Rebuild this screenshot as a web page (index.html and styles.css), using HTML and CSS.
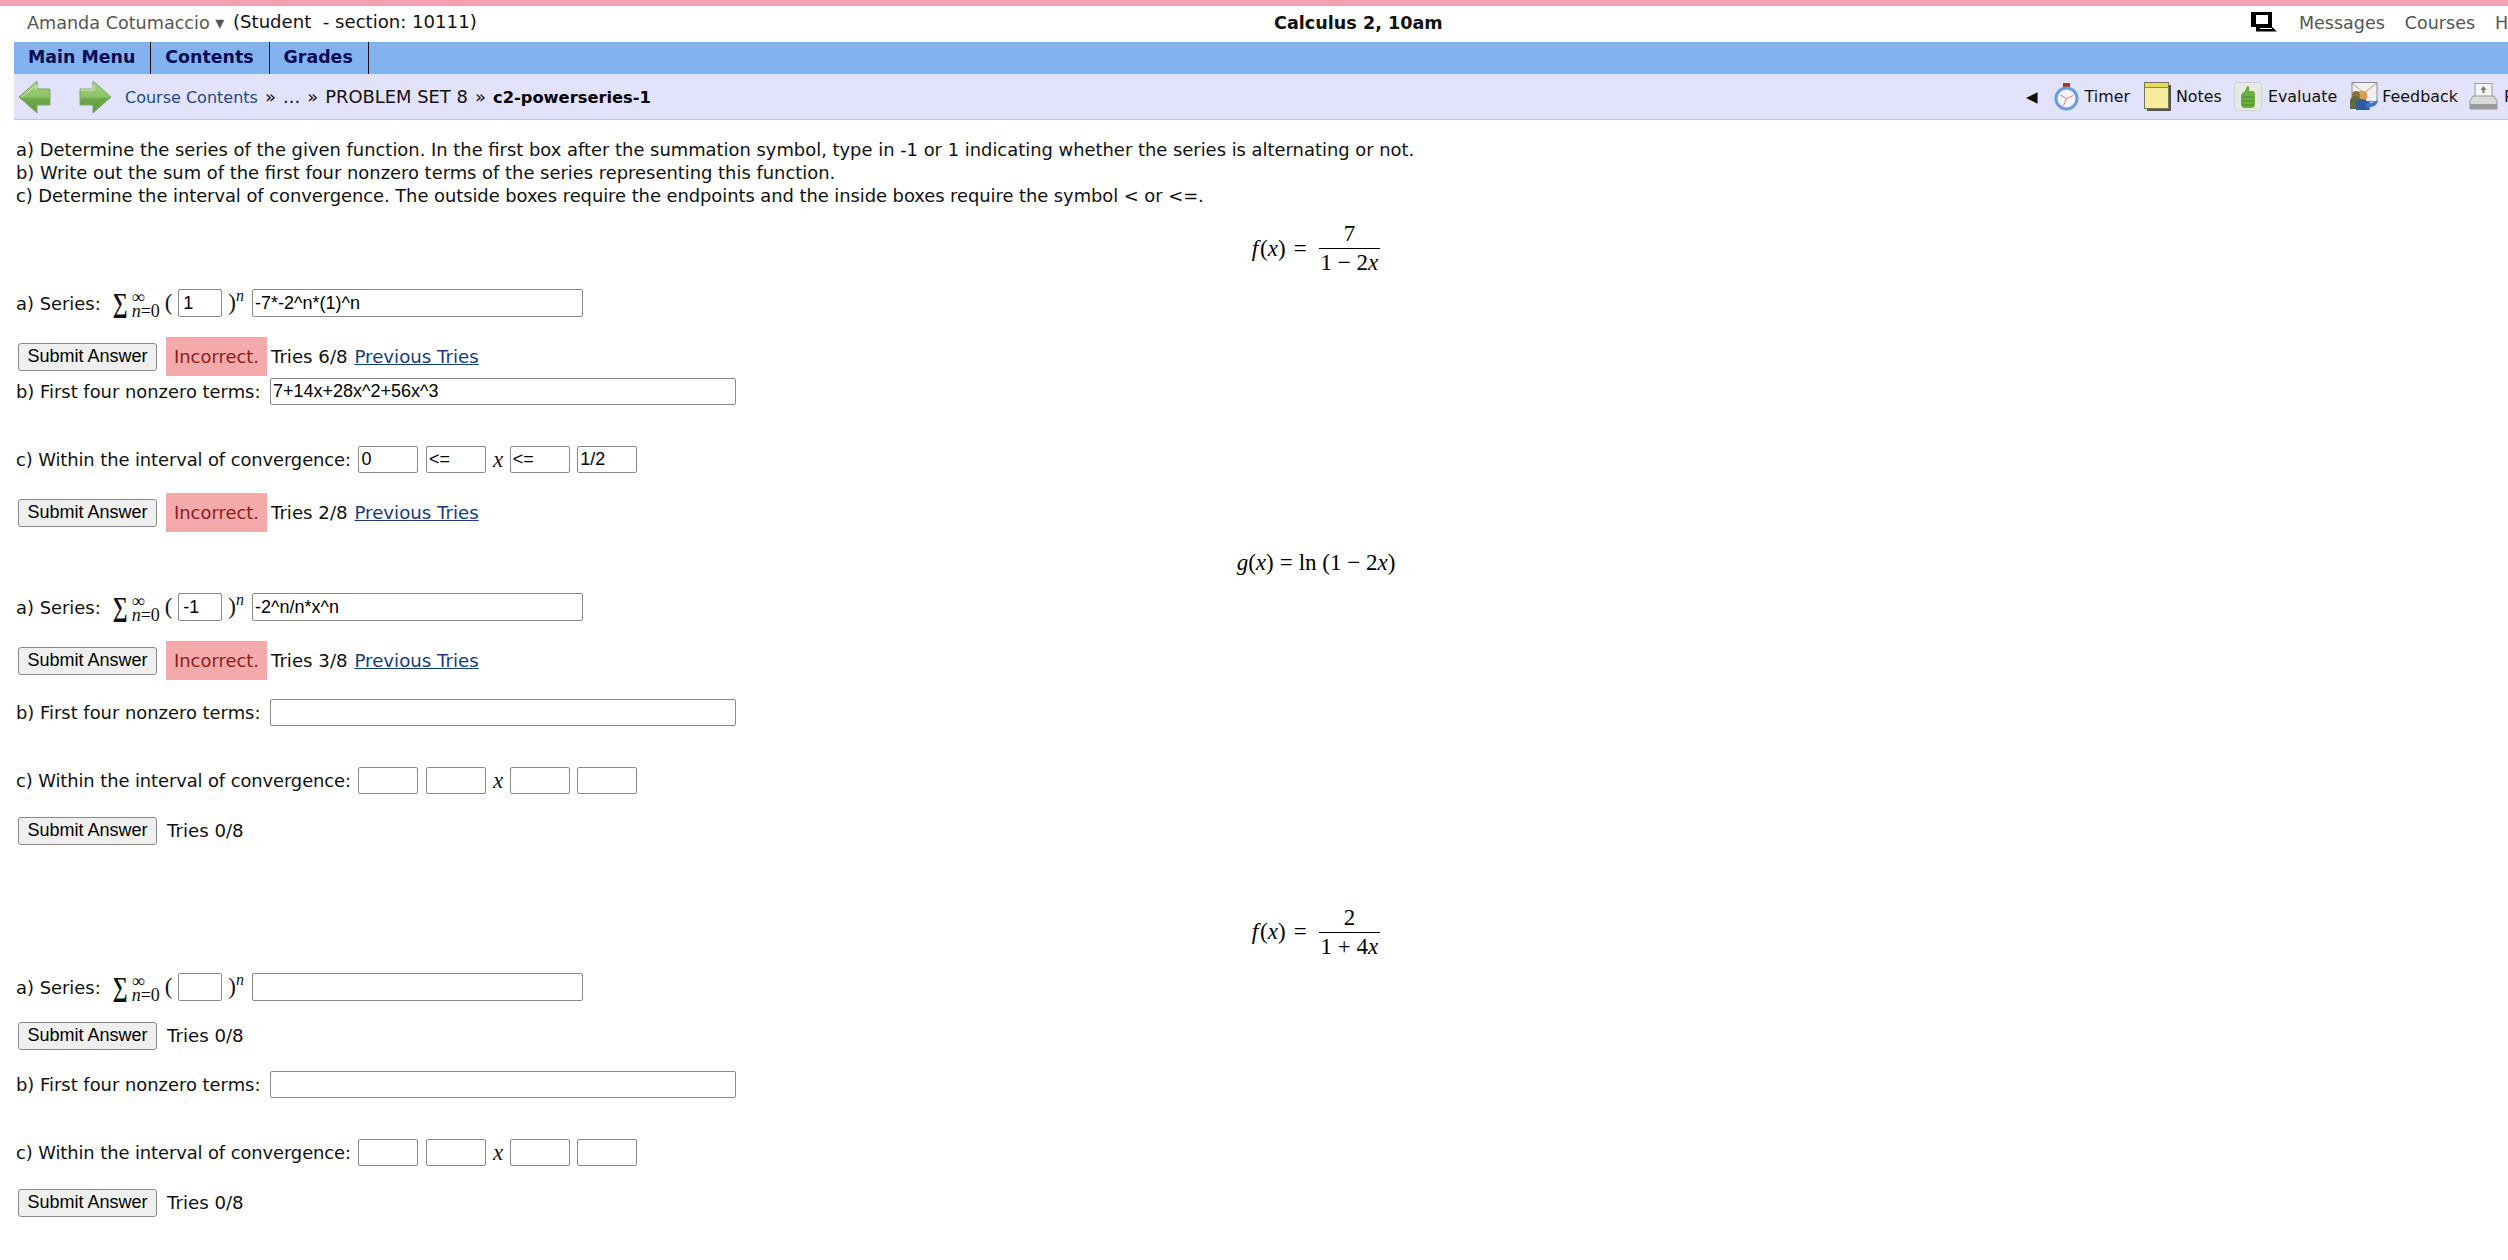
FILE: index.html
```html
<!DOCTYPE html>
<html lang="en">
<head>
    <meta charset="UTF-8">
    <title>c2-powerseries-1</title>
    <link rel="stylesheet" href="styles.css">
</head>
<body>
    <div class="pinkbar"></div>

    <div class="topbar">
        <div class="who"><span class="username">Amanda Cotumaccio <span class="caret">▾</span></span> <span class="role">(Student &nbsp;- section: 10111)</span></div>
        <div class="coursename">Calculus 2, 10am</div>
        <div class="toplinks">
            <svg class="laptop" width="28" height="20" viewBox="0 0 28 20">
                <path d="M1 0h21v15H1z M6 3v9h12V3z" fill="#000" fill-rule="evenodd"/>
                <path d="M6 15h16l5 4.5H6z" fill="#000"/>
                <path d="M10 16.5h12" stroke="#fff" stroke-width="1"/>
            </svg>
            <a>Messages</a>
            <a>Courses</a>
            <a>Help</a>
        </div>
    </div>

    <div class="menubar">
        <a class="menuitem">Main Menu</a>
        <a class="menuitem">Contents</a>
        <a class="menuitem">Grades</a>
    </div>

    <div class="toolbar">
        <svg class="arrow" width="33" height="34" viewBox="0 0 33 34">
            <defs>
                <linearGradient id="greenL" x1="0" y1="0" x2="0" y2="1">
                    <stop offset="0" stop-color="#a9d284"/>
                    <stop offset="0.5" stop-color="#8cc267"/>
                    <stop offset="0.55" stop-color="#6fa94c"/>
                    <stop offset="1" stop-color="#5f9c40"/>
                </linearGradient>
            </defs>
            <path d="M1 17 19 1v8h13v16H19v8z" fill="url(#greenL)" stroke="#7fa86a" stroke-width="1"/>
            <path d="M4 17 18 5v5" fill="none" stroke="#d3e8bd" stroke-width="1"/>
        </svg>
        <svg class="arrow arrow-next" width="33" height="34" viewBox="0 0 33 34">
            <path d="M32 17 14 1v8H1v16h13v8z" fill="url(#greenL)" stroke="#7fa86a" stroke-width="1"/>
            <path d="M2 10h13V5" fill="none" stroke="#d3e8bd" stroke-width="1"/>
        </svg>
        <div class="crumbs"><a>Course Contents</a><span class="sep"> » ... » </span>PROBLEM SET 8<span class="sep"> » </span><b>c2-powerseries-1</b></div>

        <div class="tools">
            <span class="collapse">◀</span>
            <svg class="ico" width="25" height="28" viewBox="0 0 25 28">
                <rect x="9" y="0" width="7" height="4" fill="#a8302c"/>
                <circle cx="12.5" cy="15.5" r="10.5" fill="#f4f4fa" stroke="#6c9be0" stroke-width="3"/>
                <path d="M12.5 15.5 6 12M12.5 15.5l7-3M12.5 15.5l-3 7" stroke="#d88080" stroke-width="1" fill="none"/>
            </svg>
            <span class="toollabel lbl-timer">Timer</span>
            <svg class="ico" width="27" height="29" viewBox="0 0 27 29">
                <rect x="3" y="3" width="24" height="26" fill="#55554a"/>
                <rect x="0.5" y="0.5" width="24" height="26" fill="#f6ee9e" stroke="#77775f"/>
                <rect x="1" y="1" width="23" height="4" fill="#e8d760"/>
                <path d="M1 5.5h23" stroke="#8a8a60" stroke-width="1"/>
            </svg>
            <span class="toollabel lbl-notes">Notes</span>
            <svg class="ico" width="28" height="29" viewBox="0 0 28 29">
                <rect x="0.5" y="0.5" width="27" height="28" rx="3" fill="#e8e8e4" stroke="#d0d0d0"/>
                <path d="M13 4c2 0 3 2 2 5h3c2 0 3 1 3 3v10c0 3-2 4-4 4h-6c-3 0-4-2-4-4v-8c0-2 1-3 3-4 2-2 2-4 3-6z" fill="#67b03c"/>
                <path d="M8 15h12M8 19h12M8 23h12" stroke="#4c8a2c" stroke-width="1"/>
            </svg>
            <span class="toollabel lbl-evaluate">Evaluate</span>
            <svg class="ico" width="29" height="29" viewBox="0 0 29 29">
                <rect x="3" y="0.5" width="25" height="19" fill="#f2f0ee" stroke="#8a8a8a"/>
                <path d="M3 1l12 10L28 1" fill="none" stroke="#a0a0a0"/>
                <circle cx="13" cy="14" r="5.5" fill="#d8a050"/>
                <circle cx="7" cy="13" r="4" fill="#8a7040"/>
                <path d="M1 27v-8c0-3 3-5 6-5s5 3 5 5v8z" fill="#5f6a35"/>
                <path d="M7 28v-6c0-3 3-5 6-5s7 3 7 5v6z" fill="#2f5c9a"/>
                <path d="M16 24l5 4v-3c4 0 7-2 8-7-3 2-5 3-8 3v-3z" fill="#3a78c0"/>
            </svg>
            <span class="toollabel lbl-feedback">Feedback</span>
            <svg class="ico" width="29" height="28" viewBox="0 0 29 28">
                <rect x="6" y="0.5" width="17" height="14" fill="#f4f4f4" stroke="#9a9a9a"/>
                <path d="M14.5 3l3 4h-2v3h-2V7h-2z" fill="#777"/>
                <path d="M4 13h21l3 5v8H1v-8z" fill="#dadada" stroke="#9a9a9a"/>
                <rect x="1" y="21" width="27" height="5" fill="#9c9c9c"/>
            </svg>
            <span class="toollabel">Print</span>
        </div>
    </div>

    <div class="problem">
        <div class="instructions">
            a) Determine the series of the given function. In the first box after the summation symbol, type in -1 or 1 indicating whether the series is alternating or not.<br>
            b) Write out the sum of the first four nonzero terms of the series representing this function.<br>
            <span class="third">c) Determine the interval of convergence. The outside boxes require the endpoints and the inside boxes require the symbol &lt; or &lt;=.</span>
        </div>

        <div class="mathline first">
            <span class="formula"><i class="fn">f</i>(<i>x</i>)<span class="eq eq-frac">=</span><span class="frac"><span class="num">7</span><span class="den">1 − 2<i>x</i></span></span></span>
        </div>

        <div class="row series gap-h">
            <span class="lbl">a) Series:</span>
            <span class="sum"><span class="sigma">∑</span><span class="limits"><span>∞</span><span><i>n</i>=0</span></span></span>
            <span class="paren">(</span>
            <input class="box sign" value="1">
            <span class="paren close">)<sup><i>n</i></sup></span>
            <input class="box coef" value="-7*-2^n*(1)^n">
        </div>
        <div class="row submit gap-b">
            <button class="btn">Submit Answer</button>
            <span class="bad">Incorrect.</span>
            <span class="tries">Tries 6/8 <a href="#">Previous Tries</a></span>
        </div>
        <div class="row terms gap-c">
            <span class="lbl">b) First four nonzero terms:</span>
            <input class="box long" value="7+14x+28x^2+56x^3">
        </div>
        <div class="row interval gap-d">
            <span class="lbl lbl-within">c) Within the interval of convergence:</span>
            <input class="box end" value="0">
            <input class="box end" value="&lt;=">
            <i class="var">x</i>
            <input class="box end" value="&lt;=">
            <input class="box end" value="1/2">
        </div>
        <div class="row submit gap-b">
            <button class="btn">Submit Answer</button>
            <span class="bad">Incorrect.</span>
            <span class="tries">Tries 2/8 <a href="#">Previous Tries</a></span>
        </div>

        <div class="mathline plain">
            <span class="formula"><i>g</i>(<i>x</i>)<span class="eq">=</span>ln (1 − 2<i>x</i>)</span>
        </div>

        <div class="row series gap-e">
            <span class="lbl">a) Series:</span>
            <span class="sum"><span class="sigma">∑</span><span class="limits"><span>∞</span><span><i>n</i>=0</span></span></span>
            <span class="paren">(</span>
            <input class="box sign" value="-1">
            <span class="paren close">)<sup><i>n</i></sup></span>
            <input class="box coef" value="-2^n/n*x^n">
        </div>
        <div class="row submit gap-b">
            <button class="btn">Submit Answer</button>
            <span class="bad">Incorrect.</span>
            <span class="tries">Tries 3/8 <a href="#">Previous Tries</a></span>
        </div>
        <div class="row terms gap-a">
            <span class="lbl">b) First four nonzero terms:</span>
            <input class="box long">
        </div>
        <div class="row interval gap-d">
            <span class="lbl lbl-within">c) Within the interval of convergence:</span>
            <input class="box end">
            <input class="box end">
            <i class="var">x</i>
            <input class="box end">
            <input class="box end">
        </div>
        <div class="row submit gap-i">
            <button class="btn">Submit Answer</button>
            <span class="tries plain-tries">Tries 0/8</span>
        </div>

        <div class="mathline second">
            <span class="formula"><i class="fn">f</i>(<i>x</i>)<span class="eq eq-frac">=</span><span class="frac"><span class="num">2</span><span class="den">1 + 4<i>x</i></span></span></span>
        </div>

        <div class="row series gap-f">
            <span class="lbl">a) Series:</span>
            <span class="sum"><span class="sigma">∑</span><span class="limits"><span>∞</span><span><i>n</i>=0</span></span></span>
            <span class="paren">(</span>
            <input class="box sign">
            <span class="paren close">)<sup><i>n</i></sup></span>
            <input class="box coef">
        </div>
        <div class="row submit gap-g">
            <button class="btn">Submit Answer</button>
            <span class="tries plain-tries">Tries 0/8</span>
        </div>
        <div class="row terms gap-j">
            <span class="lbl">b) First four nonzero terms:</span>
            <input class="box long">
        </div>
        <div class="row interval gap-d">
            <span class="lbl lbl-within">c) Within the interval of convergence:</span>
            <input class="box end">
            <input class="box end">
            <i class="var">x</i>
            <input class="box end">
            <input class="box end">
        </div>
        <div class="row submit gap-k">
            <button class="btn">Submit Answer</button>
            <span class="tries plain-tries">Tries 0/8</span>
        </div>
    </div>
</body>
</html>
```
FILE: styles.css
```css
html, body {
    margin: 0;
    padding: 0;
    height: 1260px;
    overflow: hidden;
    background: #ffffff;
}

body {
    font-family: "DejaVu Sans", Verdana, sans-serif;
    font-size: 17.9px;
    color: #111111;
    white-space: nowrap;
}

.pinkbar {
    height: 6px;
    background: #f0a0ae;
}

/* top row */
.topbar {
    display: flex;
    align-items: center;
    box-sizing: border-box;
    height: 36px;
    padding-bottom: 3px;
}

.who {
    width: 1274px;
    box-sizing: border-box;
    padding-left: 27px;
    flex: none;
}

.username {
    color: #555555;
    font-size: 17.6px;
}

.caret {
    font-size: 18px;
}

.role {
    font-size: 18.1px;
    position: relative;
    top: -1px;
    margin-left: 3px;
}

.coursename {
    font-weight: bold;
    font-size: 17.6px;
    width: 976px;
    flex: none;
}

.toplinks {
    display: flex;
    align-items: center;
    color: #555555;
    font-size: 17.5px;
    flex: none;
}

.laptop {
    margin-right: 21px;
    margin-top: -2px;
}

.toplinks a {
    margin-right: 20px;
}

/* blue menu */
.menubar {
    display: flex;
    box-sizing: border-box;
    height: 32px;
    margin-left: 14px;
    background: #82b2f0;
}

.menuitem {
    display: flex;
    align-items: center;
    padding: 0 15px 3px 14px;
    font-size: 17.4px;
    font-weight: bold;
    color: #0c0c50;
    border-right: 1px solid #111111;
}

/* breadcrumb row */
.toolbar {
    display: flex;
    align-items: center;
    height: 45px;
    margin-left: 14px;
    background: #e2e2fa;
    border-bottom: 1px solid #c8c8d2;
}

.arrow {
    margin-left: 4px;
    flex: none;
}

.arrow-next {
    margin-left: 28px;
}

.crumbs {
    width: 1914px;
    box-sizing: border-box;
    padding-left: 13px;
    flex: none;
    font-size: 17.9px;
}

.crumbs a {
    color: #234a80;
    font-size: 16px;
}

.crumbs b {
    color: #000000;
    font-size: 16.3px;
}

.sep {
    word-spacing: 1.4px;
}

.tools {
    display: flex;
    align-items: center;
    flex: none;
    font-size: 15.9px;
}

.collapse {
    font-size: 15px;
    margin-right: 16px;
}

.ico {
    flex: none;
}

.toollabel {
    margin-left: 6px;
}

.lbl-timer { margin-right: 14px; }
.lbl-notes { margin-left: 5px; margin-right: 12px; }
.lbl-evaluate { margin-right: 12px; }
.lbl-feedback { margin-left: 4px; margin-right: 11px; }

.problem {
    padding-left: 16px;
}

.instructions {
    margin-top: 19px;
    line-height: 22.8px;
}

.third {
    letter-spacing: -0.05px;
}

/* math display */
.mathline {
    display: flex;
    justify-content: center;
    align-items: center;
    padding-left: 108px;
    font-family: "Liberation Serif", "Times New Roman", serif;
    font-size: 23px;
    color: #000000;
}

.mathline.first {
    height: 65px;
    margin-top: 9px;
}

.mathline.plain {
    height: 30px;
    margin-top: 16px;
}

.mathline.second {
    height: 60px;
    margin-top: 52px;
}

.formula {
    display: inline-flex;
    align-items: center;
    white-space: pre;
}

.fn {
    margin-right: 2px;
}

.eq {
    margin: 0 6px;
}

.eq-frac {
    margin: 0 8px;
}

.frac {
    display: inline-flex;
    flex-direction: column;
    align-items: center;
    margin-left: 4px;
}

.num {
    padding: 0 2px 2px;
    line-height: 24px;
}

.den {
    padding: 2px 2px 0;
    line-height: 24px;
    border-top: 1.5px solid #000000;
}

/* question rows */
.row {
    display: flex;
    align-items: center;
}

.gap-a { margin-top: 19px; }
.gap-b { margin-top: 20px; }
.gap-c { margin-top: 2px; }
.gap-d { margin-top: 41px; }
.gap-e { margin-top: 15px; }
.gap-f { margin-top: 11px; }
.gap-g { margin-top: 15px; }
.gap-h { margin-top: 8px; }
.gap-i { margin-top: 17px; }
.gap-j { margin-top: 16px; }
.gap-k { margin-top: 17px; }

.series {
    height: 28px;
}

.submit {
    height: 39px;
}

.terms,
.interval {
    height: 27px;
}

.lbl-within {
    letter-spacing: -0.09px;
}

.sum {
    display: inline-flex;
    align-items: center;
    flex: none;
    width: 48px;
    margin-left: 12px;
    font-family: "Liberation Serif", serif;
}

.sigma {
    display: block;
    width: 19px;
    font-size: 21px;
    line-height: 28px;
    font-weight: bold;
    overflow: hidden;
    transform: scaleY(1.3);
}

.limits {
    display: inline-flex;
    flex-direction: column;
    font-size: 18px;
    line-height: 14px;
    margin-top: 2px;
}

.paren {
    font-family: "Liberation Serif", serif;
    font-size: 23px;
    margin-left: 4px;
}

.paren.close {
    margin-left: 6px;
}

.paren sup {
    font-size: 16px;
    line-height: 0;
}

.box {
    box-sizing: border-box;
    height: 100%;
    padding: 1px 2px;
    border: 1px solid #8a8a8a;
    border-radius: 2px;
    background: #ffffff;
    font-family: "Liberation Sans", Arial, sans-serif;
    font-size: 18px;
    color: #000000;
    outline: none;
}

.sign {
    width: 44px;
    margin-left: 6px;
    padding-left: 4px;
}

.coef {
    width: 331px;
    margin-left: 8px;
}

.long {
    width: 466px;
    margin-left: 9.5px;
}

.end {
    width: 60px;
    margin-left: 7.5px;
}

.var {
    font-family: "Liberation Serif", serif;
    font-size: 23px;
    margin-left: 7px;
    margin-right: -1px;
}

.btn {
    box-sizing: border-box;
    width: 139px;
    height: 28px;
    margin-left: 2px;
    padding: 0;
    border: 1px solid #8a8a8a;
    border-radius: 3px;
    background: #efefef;
    font-family: "Liberation Sans", Arial, sans-serif;
    font-size: 18px;
    color: #000000;
}

.bad {
    display: flex;
    align-items: center;
    height: 39px;
    margin-left: 9px;
    padding: 0 8px;
    background: #f4aaaa;
    color: #8c1c1c;
}

.tries {
    margin-left: 4px;
    font-size: 18.2px;
}

.plain-tries {
    margin-left: 10px;
}

.tries a {
    color: #1a3a7a;
    margin-left: 1px;
}
```
